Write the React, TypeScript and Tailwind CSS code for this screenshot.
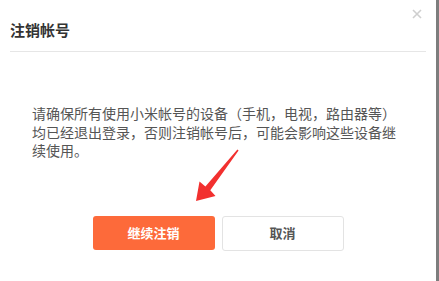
export default function App() {
  return (
    <div
      className="relative flex h-[281px] w-[439px] bg-white"
      style={{ fontFamily: '"Noto Sans CJK SC", "Noto Sans", sans-serif' }}
    >
      {/* Dialog */}
      <div className="relative flex h-full w-[436px] flex-col bg-white">
        <div className="mx-[10px] h-[52px] border-b border-[#e6e6e6] pt-[20px]">
          <h2 className="text-[15px] font-bold leading-[20px] text-[#333]">注销帐号</h2>
        </div>

        <button className="absolute right-[13px] top-[8px] flex h-[12px] w-[12px] items-center justify-center">
          <svg width="10" height="10" viewBox="0 0 10 10">
            <path d="M1 1L9 9M9 1L1 9" stroke="#cfcfcf" strokeWidth="1.6" />
          </svg>
        </button>

        <p className="ml-[32px] mt-[52px] w-[370px] text-[14px] leading-[18.5px] text-[#555]">
          请确保所有使用小米帐号的设备（手机，电视，路由器等）均已经退出登录，否则注销帐号后，可能会影响这些设备继续使用。
        </p>

        <div className="mt-[56px] flex justify-center gap-[7px]">
          <button className="h-[34px] w-[122px] rounded-[3px] bg-[#fd6a3a] text-[13px] font-bold text-white">
            继续注销
          </button>
          <button className="h-[35px] w-[122px] rounded-[3px] border border-[#e3e3e3] bg-white text-[13px] font-bold text-[#555]">
            取消
          </button>
        </div>
      </div>
      <div className="h-full w-[3px] bg-[#7d7d7d]" />

      {/* Annotation arrow */}
      <svg className="pointer-events-none absolute left-0 top-0" width="439" height="281">
        <polygon
          points="237.4,149.6 205.4,186.4 199.5,181.5 196,201 215.5,196 210.3,190.2 238.6,150.4"
          fill="#f2302f"
        />
      </svg>
    </div>
  );
}
